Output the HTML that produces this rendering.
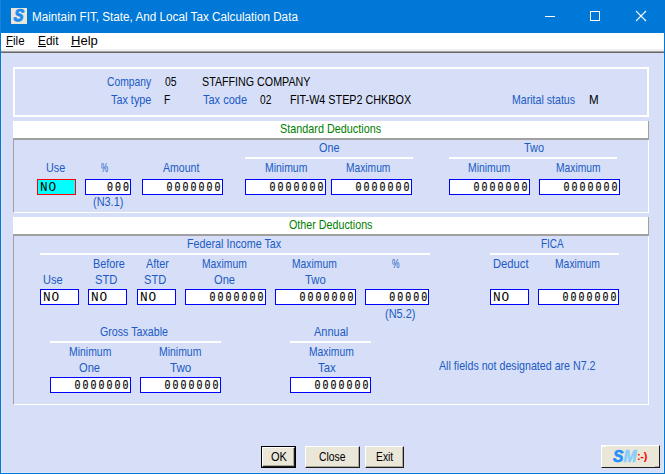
<!DOCTYPE html><html><head><meta charset="utf-8"><title>Maintain FIT, State, And Local Tax Calculation Data</title><style>

html,body{margin:0;padding:0}
body{width:665px;height:474px;position:relative;overflow:hidden;background:#D6DFF7;font-family:"Liberation Sans",sans-serif}
.a{position:absolute}
.t{position:absolute;white-space:nowrap;line-height:16px;height:16px;transform-origin:0 0;display:block}
.f{position:absolute;box-sizing:border-box;border:1px solid #0000FF;background:#fff;height:16px;overflow:hidden}
.f.sel{border-color:#FF0000;background:#00FFFF}
.f span{position:absolute;top:1px;line-height:14px;height:14px;font-family:"Liberation Mono",monospace;font-size:12px;letter-spacing:0.8px;color:#000;white-space:nowrap}
.f span.r{right:-1px;letter-spacing:2.45px;transform:scaleX(0.83);transform-origin:100% 0;-webkit-text-stroke:0.2px #000}
.f span.l{left:1.5px;transform:scaleX(1.06);transform-origin:0 0}
.hdr{position:absolute;left:13px;width:636px;height:19px;box-sizing:border-box;background:#fff;border-right:1px solid #A0A0A0;border-bottom:2px solid #A0A0A0}
.pnl{position:absolute;left:13px;width:636px;box-sizing:border-box;border-left:1px solid #A0A0A0;border-right:1px solid #fff;border-bottom:1px solid #fff}
.ln{position:absolute;height:2px;background:#fff}
.btn{position:absolute;box-sizing:border-box;background:#EAE6D8;height:22px;border-top:1px solid #fff;border-left:1px solid #fff;border-right:1px solid #1c1c1c;border-bottom:1px solid #1c1c1c;box-shadow:inset -1px -1px 0 #ACA899}

</style></head><body>
<div class="a" style="left:0;top:0;width:665px;height:33px;background:#0078D7"></div>
<div class="a" style="left:0;top:0;width:1px;height:474px;background:#0078D7"></div>
<div class="a" style="left:664px;top:0;width:1px;height:474px;background:#0078D7"></div>
<div class="a" style="left:0;top:473px;width:665px;height:1px;background:#0078D7"></div>
<div class="a" style="left:1px;top:53px;width:1px;height:420px;background:#E1E7FA"></div>
<div class="a" style="left:663px;top:53px;width:1px;height:420px;background:#E1E7FA"></div>
<div class="a" style="left:2px;top:472px;width:661px;height:1px;background:#E1E7FA"></div>
<div class="a" style="left:0;top:0;width:1px;height:33px;background:#1A84DA"></div>
<div class="a" style="left:11px;top:8px;width:16px;height:16px;background:#EAE6D8;overflow:hidden"><span class="a" style="left:2.3px;top:-2px;transform:scaleX(0.86) skewX(-8deg);transform-origin:50% 50%;font:italic bold 17px/20px 'Liberation Sans',sans-serif;color:#1E8CF5;-webkit-text-stroke:1px #1E8CF5">S</span></div>
<svg class="a" style="left:540px;top:0" width="120" height="32" viewBox="0 0 120 32"><g stroke="#fff" stroke-width="1" fill="none"><path d="M5 16.5H15"/><rect x="50.5" y="11.5" width="9" height="9"/><path d="M96 11L106 21M106 11L96 21" stroke-width="1.1"/></g></svg>
<div class="a" style="left:1px;top:33px;width:663px;height:16px;background:#fff"></div>
<div class="a" style="left:1px;top:49px;width:663px;height:2px;background:#F0F0F0"></div>
<div class="a" style="left:1px;top:51px;width:663px;height:1px;background:#A0A0A0"></div>
<div class="a" style="left:1px;top:52px;width:663px;height:1px;background:#696969"></div>
<div class="a" style="left:13px;top:67px;width:636px;height:50px;box-sizing:border-box;border:2px solid #fff"></div>
<div class="hdr" style="top:121px"></div>
<div class="pnl" style="top:140px;height:73px"></div>
<div class="hdr" style="top:217px"></div>
<div class="pnl" style="top:236px;height:169px"></div>
<div class="ln" style="left:245px;top:157px;width:168px"></div>
<div class="ln" style="left:449px;top:157px;width:168px"></div>
<div class="ln" style="left:40px;top:253px;width:390px"></div>
<div class="ln" style="left:490px;top:253px;width:129px"></div>
<div class="ln" style="left:50px;top:341px;width:171px"></div>
<div class="ln" style="left:290px;top:341px;width:81px"></div>
<div class="f sel" style="left:37px;top:179px;width:39px"><span class="l">NO</span></div>
<div class="f" style="left:85px;top:179px;width:46px"><span class="r">000</span></div>
<div class="f" style="left:142px;top:179px;width:81px"><span class="r">0000000</span></div>
<div class="f" style="left:245px;top:179px;width:81px"><span class="r">0000000</span></div>
<div class="f" style="left:331px;top:179px;width:81px"><span class="r">0000000</span></div>
<div class="f" style="left:449px;top:179px;width:81px"><span class="r">0000000</span></div>
<div class="f" style="left:539px;top:179px;width:81px"><span class="r">0000000</span></div>
<div class="f" style="left:40px;top:289px;width:39px"><span class="l">NO</span></div>
<div class="f" style="left:88px;top:289px;width:39px"><span class="l">NO</span></div>
<div class="f" style="left:137px;top:289px;width:39px"><span class="l">NO</span></div>
<div class="f" style="left:185px;top:289px;width:81px"><span class="r">0000000</span></div>
<div class="f" style="left:275px;top:289px;width:81px"><span class="r">0000000</span></div>
<div class="f" style="left:365px;top:289px;width:64px"><span class="r">00000</span></div>
<div class="f" style="left:490px;top:289px;width:39px"><span class="l">NO</span></div>
<div class="f" style="left:538px;top:289px;width:81px"><span class="r">0000000</span></div>
<div class="f" style="left:50px;top:377px;width:81px"><span class="r">0000000</span></div>
<div class="f" style="left:140px;top:377px;width:81px"><span class="r">0000000</span></div>
<div class="f" style="left:290px;top:377px;width:81px"><span class="r">0000000</span></div>
<div class="a" style="left:261px;top:446px;width:35px;height:22px;background:#000"></div>
<div class="btn" style="left:262px;top:447px;width:33px;height:20px"></div>
<div class="btn" style="left:305px;top:446px;width:55px"></div>
<div class="btn" style="left:365px;top:446px;width:39px"></div>
<div class="btn" style="left:601px;top:445px;width:59px;height:23px;box-shadow:none"></div>
<div class="a" style="left:601px;top:446px;width:5px;height:1px;background:#fff"></div>
<div class="a" style="left:655px;top:466px;width:4px;height:1px;background:#ACA899"></div>
<span class="t" id="sm" style="left:613px;top:448px;line-height:18px;height:18px;font:italic bold 17px/18px 'Liberation Sans',sans-serif;transform:scaleX(0.92)"><span style="color:#1E90FF;-webkit-text-stroke:0.6px #1E90FF">S</span><span style="color:#87CEFA;-webkit-text-stroke:0.6px #87CEFA">M</span></span>
<span class="t" id="smile" style="left:637px;top:448px;font:bold 11px/16px 'Liberation Sans',sans-serif;color:#FF0000;letter-spacing:-0.3px">:-)</span>
<span class="t" id="t0" style="left:106.71px;top:74px;font-size:13px;color:#205AC4;transform:scaleX(0.7945);">Company</span>
<span class="t" id="t1" style="left:165.0px;top:74px;font-size:13px;color:#000;transform:scaleX(0.8000);">05</span>
<span class="t" id="t2" style="left:202.18px;top:74px;font-size:13px;color:#000;transform:scaleX(0.8231);">STAFFING COMPANY</span>
<span class="t" id="t3" style="left:111.2px;top:92px;font-size:13px;color:#205AC4;transform:scaleX(0.8333);">Tax type</span>
<span class="t" id="t4" style="left:164.21px;top:92px;font-size:13px;color:#000;transform:scaleX(0.7857);">F</span>
<span class="t" id="t5" style="left:203.0px;top:92px;font-size:13px;color:#205AC4;transform:scaleX(0.8462);">Tax code</span>
<span class="t" id="t6" style="left:260.0px;top:92px;font-size:13px;color:#000;transform:scaleX(0.7857);">02</span>
<span class="t" id="t7" style="left:289.67px;top:92px;font-size:13px;color:#000;transform:scaleX(0.8299);">FIT-W4 STEP2 CHKBOX</span>
<span class="t" id="t8" style="left:511.68px;top:92px;font-size:13px;color:#205AC4;transform:scaleX(0.8158);">Marital status</span>
<span class="t" id="t9" style="left:588.61px;top:92px;font-size:13px;color:#000;transform:scaleX(0.8889);">M</span>
<span class="t" id="t10" style="left:280.37px;top:121px;font-size:13px;color:#008000;transform:scaleX(0.8333);">Standard Deductions</span>
<span class="t" id="t11" style="left:319.17px;top:140px;font-size:13px;color:#205AC4;transform:scaleX(0.8348);">One</span>
<span class="t" id="t12" style="left:523.7px;top:140px;font-size:13px;color:#205AC4;transform:scaleX(0.8391);">Two</span>
<span class="t" id="t13" style="left:46.17px;top:160px;font-size:13px;color:#205AC4;transform:scaleX(0.8318);">Use</span>
<span class="t" id="t14" style="left:101.2px;top:160px;font-size:13px;color:#205AC4;transform:scaleX(0.6182);">%</span>
<span class="t" id="t15" style="left:163.0px;top:160px;font-size:13px;color:#205AC4;transform:scaleX(0.8111);">Amount</span>
<span class="t" id="t16" style="left:264.7px;top:160px;font-size:13px;color:#205AC4;transform:scaleX(0.8039);">Minimum</span>
<span class="t" id="t17" style="left:345.91px;top:160px;font-size:13px;color:#205AC4;transform:scaleX(0.7873);">Maximum</span>
<span class="t" id="t18" style="left:467.9px;top:160px;font-size:13px;color:#205AC4;transform:scaleX(0.8000);">Minimum</span>
<span class="t" id="t19" style="left:555.71px;top:160px;font-size:13px;color:#205AC4;transform:scaleX(0.7909);">Maximum</span>
<span class="t" id="t20" style="left:92.86px;top:194px;font-size:13px;color:#205AC4;transform:scaleX(0.8412);">(N3.1)</span>
<span class="t" id="t21" style="left:289.18px;top:217px;font-size:13px;color:#008000;transform:scaleX(0.8250);">Other Deductions</span>
<span class="t" id="t22" style="left:186.97px;top:236px;font-size:13px;color:#205AC4;transform:scaleX(0.8265);">Federal Income Tax</span>
<span class="t" id="t23" style="left:541.23px;top:236px;font-size:13px;color:#205AC4;transform:scaleX(0.7655);">FICA</span>
<span class="t" id="t24" style="left:92.87px;top:256px;font-size:13px;color:#205AC4;transform:scaleX(0.8324);">Before</span>
<span class="t" id="t25" style="left:145.7px;top:256px;font-size:13px;color:#205AC4;transform:scaleX(0.8333);">After</span>
<span class="t" id="t26" style="left:201.71px;top:256px;font-size:13px;color:#205AC4;transform:scaleX(0.7945);">Maximum</span>
<span class="t" id="t27" style="left:291.71px;top:256px;font-size:13px;color:#205AC4;transform:scaleX(0.7945);">Maximum</span>
<span class="t" id="t28" style="left:392.0px;top:256px;font-size:13px;color:#205AC4;transform:scaleX(0.6545);">%</span>
<span class="t" id="t29" style="left:492.84px;top:256px;font-size:13px;color:#205AC4;transform:scaleX(0.8625);">Deduct</span>
<span class="t" id="t30" style="left:554.9px;top:256px;font-size:13px;color:#205AC4;transform:scaleX(0.7964);">Maximum</span>
<span class="t" id="t31" style="left:42.85px;top:272px;font-size:13px;color:#205AC4;transform:scaleX(0.8455);">Use</span>
<span class="t" id="t32" style="left:94.64px;top:272px;font-size:13px;color:#205AC4;transform:scaleX(0.8625);">STD</span>
<span class="t" id="t33" style="left:144.15px;top:272px;font-size:13px;color:#205AC4;transform:scaleX(0.8542);">STD</span>
<span class="t" id="t34" style="left:213.64px;top:272px;font-size:13px;color:#205AC4;transform:scaleX(0.8565);">One</span>
<span class="t" id="t35" style="left:305.0px;top:272px;font-size:13px;color:#205AC4;transform:scaleX(0.8696);">Two</span>
<span class="t" id="t36" style="left:384.86px;top:306px;font-size:13px;color:#205AC4;transform:scaleX(0.8412);">(N5.2)</span>
<span class="t" id="t37" style="left:99.88px;top:324px;font-size:13px;color:#205AC4;transform:scaleX(0.8207);">Gross Taxable</span>
<span class="t" id="t38" style="left:313.7px;top:324px;font-size:13px;color:#205AC4;transform:scaleX(0.8450);">Annual</span>
<span class="t" id="t39" style="left:68.7px;top:344px;font-size:13px;color:#205AC4;transform:scaleX(0.8039);">Minimum</span>
<span class="t" id="t40" style="left:158.7px;top:344px;font-size:13px;color:#205AC4;transform:scaleX(0.8039);">Minimum</span>
<span class="t" id="t41" style="left:308.71px;top:344px;font-size:13px;color:#205AC4;transform:scaleX(0.7945);">Maximum</span>
<span class="t" id="t42" style="left:78.64px;top:360px;font-size:13px;color:#205AC4;transform:scaleX(0.8565);">One</span>
<span class="t" id="t43" style="left:170.0px;top:360px;font-size:13px;color:#205AC4;transform:scaleX(0.8913);">Two</span>
<span class="t" id="t44" style="left:318.0px;top:360px;font-size:13px;color:#205AC4;transform:scaleX(0.8750);">Tax</span>
<span class="t" id="t45" style="left:438.8px;top:358px;font-size:13px;color:#205AC4;transform:scaleX(0.8205);">All fields not designated are N7.2</span>
<span class="t" id="t46" style="left:270.75px;top:449px;font-size:13px;color:#000;transform:scaleX(0.8471);">OK</span>
<span class="t" id="t47" style="left:319.2px;top:449px;font-size:13px;color:#000;transform:scaleX(0.7969);">Close</span>
<span class="t" id="t48" style="left:376.2px;top:449px;font-size:13px;color:#000;transform:scaleX(0.7952);">Exit</span>
<span class="t" id="t49" style="left:32.06px;top:9px;font-size:12.5px;color:#fff;transform:scaleX(0.9364);">Maintain FIT, State, And Local Tax Calculation Data</span>
<span class="t" id="t50" style="left:5.58px;top:33px;font-size:12.5px;color:#000;transform:scaleX(0.9211);"><u>F</u>ile</span>
<span class="t" id="t51" style="left:37.55px;top:33px;font-size:12.5px;color:#000;transform:scaleX(0.9500);"><u>E</u>dit</span>
<span class="t" id="t52" style="left:70.96px;top:33px;font-size:12.5px;color:#000;transform:scaleX(1.0417);"><u>H</u>elp</span>
</body></html>
